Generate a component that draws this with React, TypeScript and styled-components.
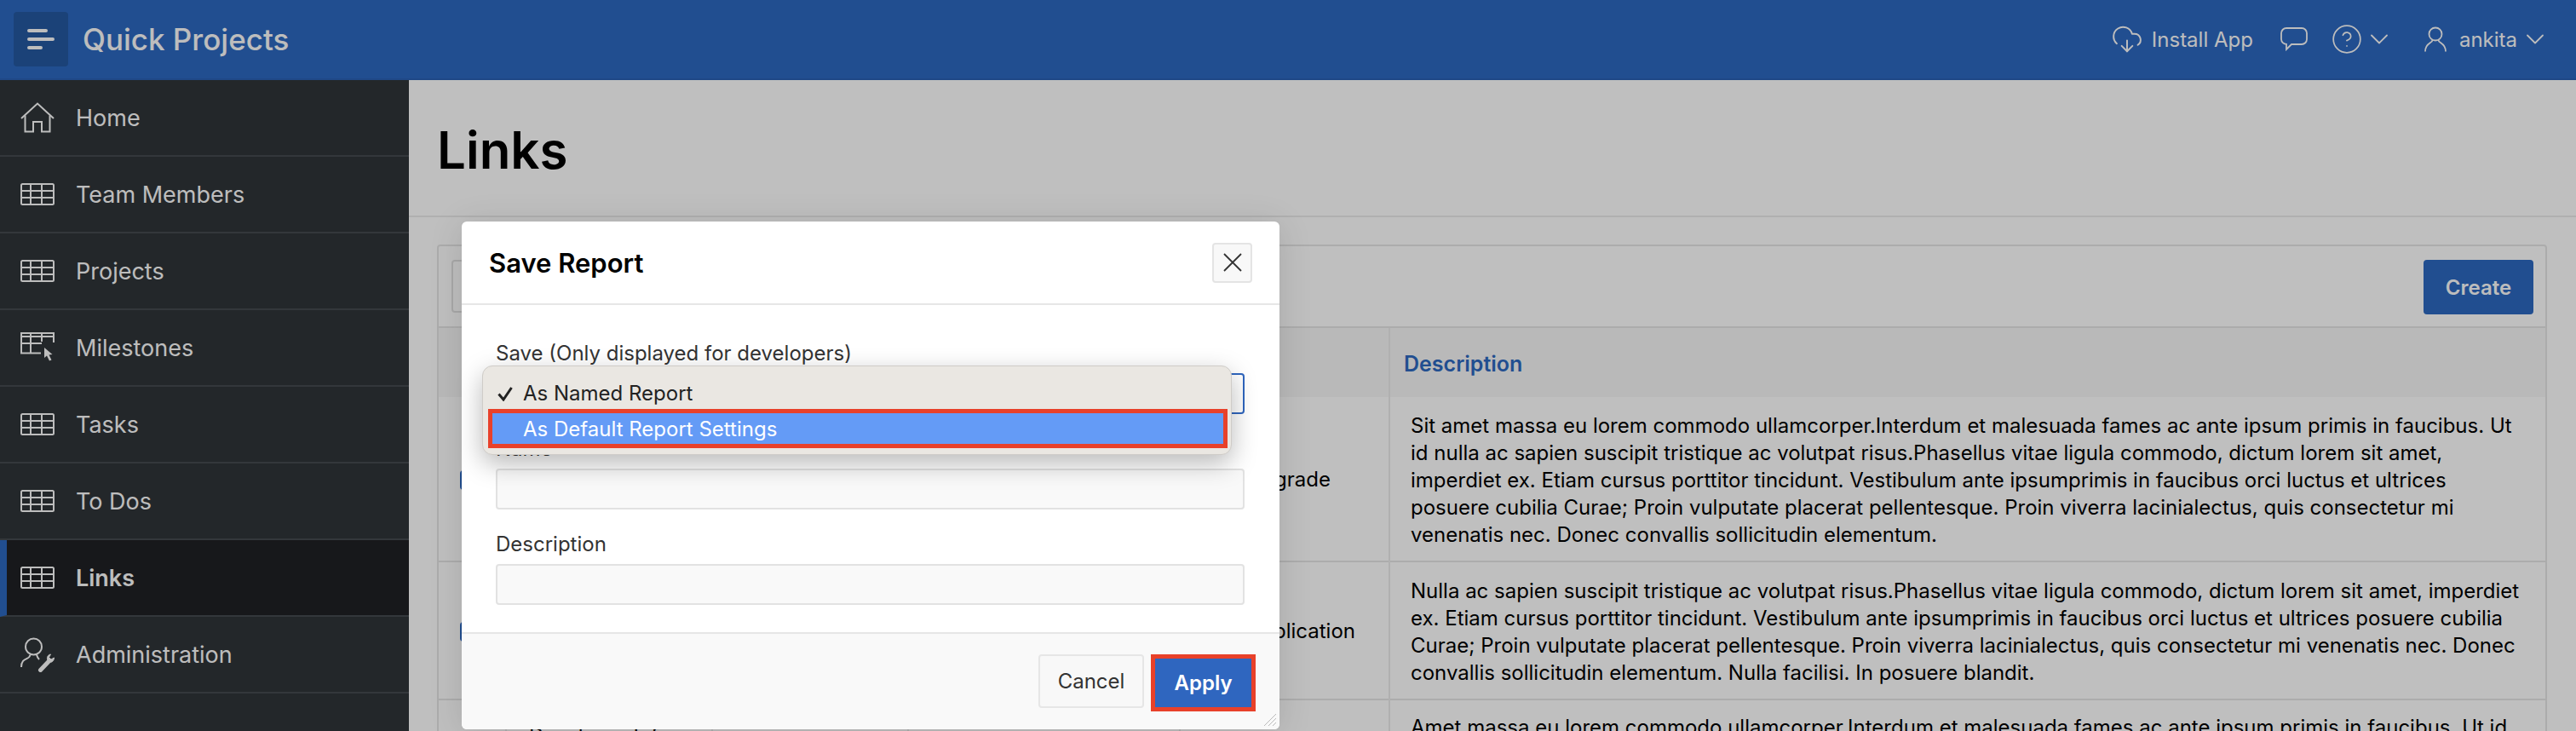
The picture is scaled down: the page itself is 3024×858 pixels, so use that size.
import React from "react";
import styled, { createGlobalStyle } from "styled-components";
import { CloudDownload, CircleHelp, ChevronDown } from "lucide-react";

const Global = createGlobalStyle`
  html, body { margin: 0; padding: 0; width: 3024px; height: 858px; overflow: hidden; background: #fff; }
  * { box-sizing: border-box; }
  body { font-family: Inter, "Liberation Sans", sans-serif; color: #000; }
`;

const Page = styled.div`
  position: relative;
  width: 3024px;
  height: 858px;
  overflow: hidden;
  display: flex;
  flex-direction: column;
`;

const TopBar = styled.header`
  height: 94px;
  flex: none;
  background: #2d68c0;
  border-bottom: 2px solid #2a61b3;
  display: flex;
  align-items: center;
  padding: 0 30px 0 16px;
  color: #fcfcfc;
`;
const MenuButton = styled.div`
  width: 64px;
  height: 64px;
  border-radius: 4px;
  background: #2558a0;
  display: flex;
  align-items: center;
  justify-content: center;
  margin-right: 17px;
`;
const AppTitle = styled.div`
  font-size: 35px;
  font-weight: 500;
  flex: 1;
`;
const NavGroup = styled.div<{ $gap: number; $mr: number }>`
  display: flex;
  align-items: center;
  gap: ${(p) => p.$gap}px;
  margin-right: ${(p) => p.$mr}px;
  font-size: 24px;
`;
const Caret = styled(ChevronDown)<{ $ml: number }>`
  margin-left: ${(p) => p.$ml}px;
`;

const Body = styled.div`
  flex: 1;
  display: flex;
  min-height: 0;
`;
const Sidebar = styled.nav`
  width: 480px;
  flex: none;
  background: #2f3438;
`;
const NavItem = styled.div<{ $active?: boolean }>`
  height: 90px;
  display: flex;
  align-items: center;
  gap: 25px;
  padding-left: ${(p) => (p.$active ? 16 : 24)}px;
  border-left: ${(p) => (p.$active ? "8px solid #2d68c0" : "none")};
  border-bottom: 2px solid #444a4f;
  background: ${(p) => (p.$active ? "#1f2024" : "transparent")};
  color: #fcfcfc;
  font-size: 27px;
  font-weight: ${(p) => (p.$active ? 600 : 400)};
`;
const NavIcon = styled.span`
  width: 40px;
  height: 40px;
  flex: none;
  display: flex;
  align-items: center;
  justify-content: center;
`;

const Main = styled.main`
  flex: 1;
  min-width: 0;
  background: #fff;
`;
const PageHeader = styled.div`
  height: 161px;
  border-bottom: 2px solid #ebebeb;
  padding: 46px 0 0 33px;
`;
const PageTitle = styled.h1`
  margin: 0;
  font-size: 60px;
  line-height: 72px;
  font-weight: 600;
`;
const Region = styled.div`
  padding: 32px 34px 0 33px;
`;
const Panel = styled.section`
  border: 2px solid #e6e6e6;
  border-radius: 4px 4px 0 0;
`;
const Toolbar = styled.div`
  height: 96px;
  display: flex;
  align-items: flex-start;
  justify-content: space-between;
  padding: 16px 14px 0 15px;
  border-bottom: 2px solid #e6e6e6;
`;
const SearchBox = styled.div`
  width: 500px;
  height: 62px;
  border: 2px solid #e0e0e0;
  border-radius: 4px;
`;
const CreateButton = styled.div`
  width: 129px;
  height: 64px;
  border-radius: 4px;
  background: #2d68c0;
  color: #fcfcfc;
  font-size: 24px;
  font-weight: 600;
  display: flex;
  align-items: center;
  justify-content: center;
`;
const Table = styled.table`
  width: 100%;
  table-layout: fixed;
  border-collapse: collapse;
`;
const HeadCell = styled.th`
  height: 81px;
  background: #f7f7f7;
  border-left: 2px solid #ebebeb;
  text-align: left;
  padding: 2px 16px 0;
  font-size: 25px;
  font-weight: 600;
  color: #2d68c0;
  &:first-child { border-left: none; }
`;
const BodyRow = styled.tr`
  border-bottom: 2px solid #e6e6e6;
`;
const Cell = styled.td<{ $right?: number }>`
  border-left: 2px solid #ebebeb;
  padding: 17px ${(p) => p.$right ?? 16}px 15px;
  text-align: ${(p) => (p.$right ? "right" : "left")};
  font-size: 24px;
  line-height: 32px;
  vertical-align: middle;
  &:first-child { border-left: none; }
`;
const TopCell = styled(Cell)`
  vertical-align: top;
  padding-top: 26px;
  padding-left: 26px;
`;
const DescCell = styled(Cell)<{ $top: number }>`
  padding: ${(p) => p.$top}px 24px ${(p) => 32 - p.$top}px;
  vertical-align: top;
`;
const EditLink = styled.span`
  display: block;
  width: 28px;
  height: 23px;
  margin: 0 auto;
  border-radius: 4px;
  background: #2d68c0;
`;

const Scrim = styled.div`
  position: absolute;
  inset: 0;
  background: rgba(0, 0, 0, 0.25);
  z-index: 10;
`;
const Modal = styled.div`
  position: absolute;
  z-index: 20;
  left: 542px;
  top: 260px;
  width: 960px;
  height: 596px;
  background: #fff;
  border-radius: 6px;
  box-shadow: 0 4px 40px rgba(0, 0, 0, 0.12);
  display: flex;
  flex-direction: column;
`;
const ModalHeader = styled.div`
  height: 98px;
  flex: none;
  border-bottom: 2px solid #e6e6e6;
  display: flex;
  align-items: center;
  justify-content: space-between;
  padding: 0 32px 0 32px;
`;
const ModalTitle = styled.div`
  font-size: 31px;
  font-weight: 600;
`;
const CloseButton = styled.div`
  width: 47px;
  height: 47px;
  background: #f8f8f8;
  border: 2px solid #e4e4e4;
  border-radius: 4px;
  display: flex;
  align-items: center;
  justify-content: center;
`;
const ModalBody = styled.div`
  flex: 1;
  padding: 41px 41px 0 40px;
  display: flex;
  flex-direction: column;
  gap: 25px;
`;
const Field = styled.div`
  display: flex;
  flex-direction: column;
  gap: 7px;
`;
const Label = styled.div`
  font-size: 24px;
  line-height: 32px;
  color: #333;
`;
const Input = styled.div<{ $focus?: boolean }>`
  height: 48px;
  background: ${(p) => (p.$focus ? "#fff" : "#f9f9f9")};
  border: 2px solid ${(p) => (p.$focus ? "#2f66bf" : "#e2e2e2")};
  border-radius: 4px;
`;
const ModalFooter = styled.div`
  height: 114px;
  flex: none;
  background: #f9f9f9;
  border-top: 2px solid #e6e6e6;
  border-radius: 0 0 6px 6px;
  display: flex;
  justify-content: flex-end;
  align-items: flex-start;
  gap: 8px;
  padding: 24px 28px 0 0;
`;
const CancelButton = styled.div`
  width: 124px;
  height: 63px;
  background: #f8f8f8;
  border: 2px solid #e6e6e6;
  border-radius: 4px;
  font-size: 24px;
  color: #333;
  display: flex;
  align-items: center;
  justify-content: center;
`;
const ApplyButton = styled.div`
  width: 123px;
  height: 67px;
  background: #2f66bf;
  border: 5px solid #e8412a;
  color: #fff;
  font-size: 24px;
  font-weight: 600;
  display: flex;
  align-items: center;
  justify-content: center;
`;
const Grip = styled.svg`
  position: absolute;
  right: 3px;
  bottom: 3px;
`;
const Menu = styled.div`
  position: absolute;
  left: 24px;
  top: 169px;
  width: 880px;
  height: 105px;
  background: #eae7e2;
  border: 1px solid #cfccc8;
  border-radius: 12px;
  box-shadow: 0 10px 30px rgba(0, 0, 0, 0.28);
  padding: 13px 4px 0 6px;
  font-size: 24px;
  color: #222;
`;
const MenuRow = styled.div`
  height: 37px;
  display: flex;
  align-items: center;
  padding-left: 11px;
  gap: 12px;
`;
const MenuSelected = styled.div`
  height: 46px;
  background: #649bf6;
  border: 5px solid #e8412a;
  color: #fff;
  display: flex;
  align-items: center;
  padding-left: 36px;
`;

const TableIcon = () => (
  <svg width="40" height="26" viewBox="0 0 40 26" fill="none" stroke="#fcfcfc" strokeWidth="2">
    <rect x="1" y="1" width="38" height="24" rx="1.5" />
    <path d="M1 9h38M1 17h38M12 1v24M25 1v24" />
  </svg>
);
const HomeIcon = () => (
  <svg width="40" height="36" viewBox="0 0 40 36" fill="none" stroke="#fcfcfc" strokeWidth="2">
    <path d="M1 19L20 1.5 39 19" />
    <path d="M5.5 15.5V34.500H15V23H25V34.500H34.500V15.500" />
  </svg>
);
const PointerTableIcon = () => (
  <svg width="40" height="36" viewBox="0 0 40 36" fill="none" stroke="#fcfcfc" strokeWidth="2">
    <path d="M39 12V1H1V24.500H24" />
    <path d="M1 5h38M1 13h24M12 1v24M25 1v10" />
    <path d="M28 18l0 12 3-2.500 3 6 2.500-1-3-6 4-.5z" fill="#fcfcfc" stroke="none" />
  </svg>
);
const AdminIcon = () => (
  <svg width="40" height="41" viewBox="0 0 40 41" fill="none" stroke="#fcfcfc" strokeWidth="2">
    <circle cx="15.500" cy="11" r="9.500" />
    <path d="M11.500 20.500C11 27 1 23 1 35M19 20.500c.5 2 1.500 4 3 5.500" />
    <path d="M23.500 38.500L33 28.500" strokeWidth="5" strokeLinecap="round" />
    <path d="M32 27c-1.500-3 0-6.500 3.500-7l-2 3.500 2.500 2.500 3.500-2c0 3.500-3 6.500-6.500 5z" fill="#fcfcfc" stroke="#fcfcfc" strokeWidth="1" />
  </svg>
);
const MenuIcon = () => (
  <svg width="32" height="26" viewBox="0 0 32 26" fill="none" stroke="#fcfcfc" strokeWidth="4" strokeLinecap="round">
    <path d="M2 3h20M2 13h28M2 23h14" />
  </svg>
);
const ChatIcon = () => (
  <svg width="32" height="28" viewBox="0 0 32 28" fill="none" stroke="#fcfcfc" strokeWidth="1.800">
    <path d="M7 1h18a6 6 0 0 1 6 6v7a6 6 0 0 1-6 6H13l-6 6v-6.200A6 6 0 0 1 1 14V7a6 6 0 0 1 6-6z" />
  </svg>
);
const UserIcon = () => (
  <svg width="26" height="30" viewBox="0 0 26 30" fill="none" stroke="#fcfcfc" strokeWidth="1.800">
    <circle cx="13" cy="9" r="7.500" />
    <path d="M9.500 16c0 4-8.500 3-8.500 13.500M16.500 16c0 4 8.500 3 8.500 13.500" />
  </svg>
);
const CheckIcon = () => (
  <svg width="18" height="18" viewBox="0 0 18 18" fill="none" stroke="#222" strokeWidth="3">
    <path d="M1.500 9.500L7 16 16.500 2" />
  </svg>
);

const navItems = [
  { label: "Home", icon: <HomeIcon /> },
  { label: "Team Members", icon: <TableIcon /> },
  { label: "Projects", icon: <TableIcon /> },
  { label: "Milestones", icon: <PointerTableIcon /> },
  { label: "Tasks", icon: <TableIcon /> },
  { label: "To Dos", icon: <TableIcon /> },
  { label: "Links", icon: <TableIcon />, active: true },
  { label: "Administration", icon: <AdminIcon /> },
];

const columns = [79, 242, 230, 319, 246];

export default function App() {
  return (
    <Page>
      <Global />
      <TopBar>
        <MenuButton><MenuIcon /></MenuButton>
        <AppTitle>Quick Projects</AppTitle>
        <NavGroup $gap={10} $mr={32}>
          <CloudDownload size={38} strokeWidth={1.25} />
          <span>Install App</span>
        </NavGroup>
        <NavGroup $gap={0} $mr={27}><ChatIcon /></NavGroup>
        <NavGroup $gap={1} $mr={35}>
          <CircleHelp size={38} strokeWidth={1.1} />
          <Caret size={36} strokeWidth={1.2} $ml={0} />
        </NavGroup>
        <NavGroup $gap={15} $mr={0}>
          <UserIcon />
          <span>ankita</span>
          <Caret size={36} strokeWidth={1.2} $ml={-12} />
        </NavGroup>
      </TopBar>
      <Body>
        <Sidebar>
          {navItems.map((n) => (
            <NavItem key={n.label} $active={n.active}>
              <NavIcon>{n.icon}</NavIcon>
              {n.label}
            </NavItem>
          ))}
        </Sidebar>
        <Main>
          <PageHeader><PageTitle>Links</PageTitle></PageHeader>
          <Region>
            <Panel>
              <Toolbar>
                <SearchBox />
                <CreateButton>Create</CreateButton>
              </Toolbar>
              <Table>
                <colgroup>
                  {columns.map((w, i) => <col key={i} style={{ width: w }} />)}
                  <col />
                </colgroup>
                <thead>
                  <tr>
                    <HeadCell />
                    <HeadCell>Title</HeadCell>
                    <HeadCell>Type</HeadCell>
                    <HeadCell>Project</HeadCell>
                    <HeadCell>Link</HeadCell>
                    <HeadCell>Description</HeadCell>
                  </tr>
                </thead>
                <tbody>
                  <BodyRow>
                    <Cell><EditLink /></Cell>
                    <Cell>Release Notes</Cell>
                    <Cell>Document</Cell>
                    <Cell>Database Migration</Cell>
                    <Cell $right={68}>Upgrade</Cell>
                    <DescCell $top={18}>Sit amet massa eu lorem commodo ullamcorper.Interdum et malesuada fames ac ante ipsum primis in faucibus. Ut id nulla ac sapien suscipit tristique ac volutpat risus.Phasellus vitae ligula commodo, dictum lorem sit amet, imperdiet ex. Etiam cursus porttitor tincidunt. Vestibulum ante ipsumprimis in faucibus orci luctus et ultrices posuere cubilia Curae; Proin vulputate placerat pellentesque. Proin viverra lacinialectus, quis consectetur mi venenatis nec. Donec convallis sollicitudin elementum.</DescCell>
                  </BodyRow>
                  <BodyRow>
                    <Cell><EditLink /></Cell>
                    <Cell>User Guide</Cell>
                    <Cell>Document</Cell>
                    <Cell>Cloud Hosting</Cell>
                    <Cell $right={39}>Application</Cell>
                    <DescCell $top={18}>Nulla ac sapien suscipit tristique ac volutpat risus.Phasellus vitae ligula commodo, dictum lorem sit amet, imperdiet ex. Etiam cursus porttitor tincidunt. Vestibulum ante ipsumprimis in faucibus orci luctus et ultrices posuere cubilia Curae; Proin vulputate placerat pellentesque. Proin viverra lacinialectus, quis consectetur mi venenatis nec. Donec convallis sollicitudin elementum. Nulla facilisi. In posuere blandit.</DescCell>
                  </BodyRow>
                  <tr>
                    <Cell />
                    <TopCell>Developer Info</TopCell>
                    <Cell />
                    <Cell />
                    <Cell />
                    <DescCell $top={16}>Amet massa eu lorem commodo ullamcorper.Interdum et malesuada fames ac ante ipsum primis in faucibus. Ut id</DescCell>
                  </tr>
                </tbody>
              </Table>
            </Panel>
          </Region>
        </Main>
      </Body>
      <Scrim />
      <Modal>
        <ModalHeader>
          <ModalTitle>Save Report</ModalTitle>
          <CloseButton>
            <svg width="22" height="22" viewBox="0 0 22 22" fill="none" stroke="#333" strokeWidth="1.800">
              <path d="M1 1l20 20M21 1L1 21" />
            </svg>
          </CloseButton>
        </ModalHeader>
        <ModalBody>
          <Field>
            <Label>Save (Only displayed for developers)</Label>
            <Input $focus />
          </Field>
          <Field>
            <Label>Name</Label>
            <Input />
          </Field>
          <Field>
            <Label>Description</Label>
            <Input />
          </Field>
        </ModalBody>
        <ModalFooter>
          <CancelButton>Cancel</CancelButton>
          <ApplyButton>Apply</ApplyButton>
        </ModalFooter>
        <Menu>
          <MenuRow><CheckIcon />As Named Report</MenuRow>
          <MenuSelected>As Default Report Settings</MenuSelected>
        </Menu>
        <Grip width="16" height="16" viewBox="0 0 16 16" stroke="#bbb" strokeWidth="1">
          <path d="M1 15L15 1M6 15L15 6M11 15l4-4" />
        </Grip>
      </Modal>
    </Page>
  );
}
